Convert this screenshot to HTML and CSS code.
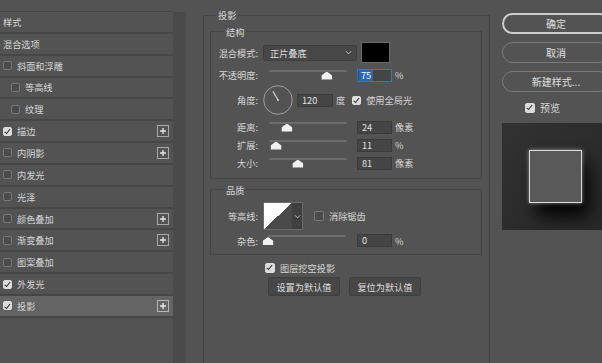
FILE: index.html
```html
<!DOCTYPE html>
<html lang="zh-CN">
<head>
<meta charset="utf-8">
<title>图层样式</title>
<link rel="stylesheet" href="styles.css">
</head>
<body>
<div class="dialog">
  <aside class="style-list">
    <div class="style-row"><span>样式</span></div>
    <div class="style-row"><span>混合选项</span></div>
    <div class="style-row"><span class="cb"></span><span>斜面和浮雕</span></div>
    <div class="style-row sub"><span class="cb"></span><span>等高线</span></div>
    <div class="style-row sub"><span class="cb"></span><span>纹理</span></div>
    <div class="style-row"><span class="cb checked"></span><span>描边</span>
      <svg class="plus" viewBox="0 0 12 12"><rect x="0.5" y="0.5" width="11" height="11" fill="none" stroke="#a9a9a9"/><path d="M6 3v6M3 6h6" stroke="#e2e2e2" stroke-width="1.4"/></svg></div>
    <div class="style-row"><span class="cb"></span><span>内阴影</span>
      <svg class="plus" viewBox="0 0 12 12"><rect x="0.5" y="0.5" width="11" height="11" fill="none" stroke="#a9a9a9"/><path d="M6 3v6M3 6h6" stroke="#e2e2e2" stroke-width="1.4"/></svg></div>
    <div class="style-row"><span class="cb"></span><span>内发光</span></div>
    <div class="style-row"><span class="cb"></span><span>光泽</span></div>
    <div class="style-row"><span class="cb"></span><span>颜色叠加</span>
      <svg class="plus" viewBox="0 0 12 12"><rect x="0.5" y="0.5" width="11" height="11" fill="none" stroke="#a9a9a9"/><path d="M6 3v6M3 6h6" stroke="#e2e2e2" stroke-width="1.4"/></svg></div>
    <div class="style-row"><span class="cb"></span><span>渐变叠加</span>
      <svg class="plus" viewBox="0 0 12 12"><rect x="0.5" y="0.5" width="11" height="11" fill="none" stroke="#a9a9a9"/><path d="M6 3v6M3 6h6" stroke="#e2e2e2" stroke-width="1.4"/></svg></div>
    <div class="style-row"><span class="cb"></span><span>图案叠加</span></div>
    <div class="style-row"><span class="cb checked"></span><span>外发光</span></div>
    <div class="style-row selected"><span class="cb checked"></span><span>投影</span>
      <svg class="plus" viewBox="0 0 12 12"><rect x="0.5" y="0.5" width="11" height="11" fill="none" stroke="#b5b5b5"/><path d="M6 3v6M3 6h6" stroke="#ececec" stroke-width="1.4"/></svg></div>
  </aside>
  <div class="scroll-strip"></div>

  <main class="settings">
    <section class="group outer">
      <div class="group-title">投影</div>

      <section class="group inner">
        <div class="group-title">结构</div>

        <div class="row r-blend">
          <span class="lbl">混合模式:</span>
          <div class="select"><span>正片叠底</span>
            <svg class="chev" viewBox="0 0 8 5"><path d="M1 1l3 3 3-3" stroke="#cfcfcf" stroke-width="1" fill="none"/></svg>
          </div>
          <div class="swatch"></div>
        </div>

        <div class="row r-opacity">
          <span class="lbl">不透明度:</span>
          <div class="slider"><span class="thumb" style="left:74%"></span></div>
          <div class="num focused"><span class="sel">75</span></div>
          <span class="unit">%</span>
        </div>

        <div class="row r-angle">
          <span class="lbl">角度:</span>
          <svg class="dial" viewBox="0 0 30 30">
            <circle cx="15" cy="15" r="14.3" fill="none" stroke="#a0a0a0" stroke-width="1"/>
            <path d="M15 15L10 6.4" stroke="#d0d0d0" stroke-width="1.2"/>
            <circle cx="15" cy="15" r="1.1" fill="#d0d0d0"/>
          </svg>
          <div class="num wide">120</div>
          <span class="unit deg">度</span>
          <span class="cb checked gl"></span>
          <span class="cb-text">使用全局光</span>
        </div>

        <div class="row r-slider r-dist">
          <span class="lbl">距离:</span>
          <div class="slider"><span class="thumb" style="left:23%"></span></div>
          <div class="num">24</div>
          <span class="unit">像素</span>
        </div>

        <div class="row r-slider">
          <span class="lbl">扩展:</span>
          <div class="slider"><span class="thumb" style="left:9%"></span></div>
          <div class="num">11</div>
          <span class="unit">%</span>
        </div>

        <div class="row r-slider">
          <span class="lbl">大小:</span>
          <div class="slider"><span class="thumb" style="left:37%"></span></div>
          <div class="num">81</div>
          <span class="unit">像素</span>
        </div>
      </section>

      <section class="group inner quality">
        <div class="group-title">品质</div>

        <div class="row r-contour">
          <span class="lbl">等高线:</span>
          <div class="contour">
            <div class="contour-swatch"></div>
            <div class="contour-drop">
              <svg class="chev" viewBox="0 0 8 5"><path d="M1 1l3 3 3-3" stroke="#cfcfcf" stroke-width="1" fill="none"/></svg>
            </div>
          </div>
          <span class="cb aa"></span>
          <span class="cb-text">消除锯齿</span>
        </div>

        <div class="row r-noise">
          <span class="lbl">杂色:</span>
          <div class="slider"><span class="thumb" style="left:0%"></span></div>
          <div class="num">0</div>
          <span class="unit">%</span>
        </div>
      </section>

      <div class="row r-knockout">
        <span class="cb checked big"></span>
        <span class="cb-text">图层挖空投影</span>
      </div>

      <div class="row r-buttons">
        <div class="btn-flat">设置为默认值</div>
        <div class="btn-flat">复位为默认值</div>
      </div>
    </section>
  </main>

  <aside class="actions">
    <div class="pill primary">确定</div>
    <div class="pill">取消</div>
    <div class="pill">新建样式...</div>
    <div class="row r-preview">
      <span class="cb checked big"></span>
      <span class="cb-text">预览</span>
    </div>
    <div class="preview-box">
      <div class="preview-square"></div>
    </div>
  </aside>
</div>
</body>
</html>
```

FILE: styles.css
```css
html, body {
  margin: 0;
  padding: 0;
}

body {
  width: 602px;
  height: 363px;
  overflow: hidden;
  background: #535353;
  font-family: "Noto Sans CJK SC", "Noto Sans", sans-serif;
  font-size: 9.2px;
  color: #d6d6d6;
}

.dialog {
  display: flex;
  width: 602px;
  height: 363px;
  overflow: hidden;
}

/* ---------- left style list ---------- */
.style-list {
  flex: none;
  width: 173px;
  padding-top: 11px;
}

.style-row {
  height: 21.85px;
  box-sizing: border-box;
  border-bottom: 2px solid #464646;
  display: flex;
  align-items: center;
  gap: 5px;
  padding: 0 4px 0 3px;
  white-space: nowrap;
}

.style-row:first-child {
  border-top: 1px solid #464646;
  height: 22.85px;
}

.style-row.sub {
  padding-left: 11px;
}

.style-row.selected {
  background: #646464;
}

.plus {
  width: 12px;
  height: 12px;
  margin-left: auto;
  flex: none;
}

.scroll-strip {
  flex: none;
  width: 13px;
  margin-top: 12px;
  background: #4a4a4a;
}

/* ---------- checkboxes ---------- */
.cb {
  flex: none;
  width: 9px;
  height: 9px;
  box-sizing: border-box;
  border: 1px solid #7a7a7a;
  border-radius: 2px;
  background: #4b4b4b;
  position: relative;
}

.cb.big {
  width: 10px;
  height: 10px;
}

.cb.checked {
  background: #dcdcdc;
  border-color: #dcdcdc;
}

.cb.checked::after {
  content: "";
  position: absolute;
  left: 2.2px;
  top: 0.4px;
  width: 2.4px;
  height: 4.6px;
  border-right: 1.6px solid #333;
  border-bottom: 1.6px solid #333;
  transform: rotate(40deg);
}

.cb-text {
  margin-left: 5px;
  white-space: nowrap;
}

/* ---------- settings ---------- */
.settings {
  flex: none;
  width: 287px;
  margin-left: 17px;
  padding-top: 15px;
}

.group {
  border: 1px solid #454545;
}

.outer {
  height: 360px;
  box-sizing: border-box;
  padding: 0 7px 0 6px;
}

.group-title {
  width: fit-content;
  height: 14px;
  line-height: 14px;
  padding: 0 2px;
  background: #535353;
  color: #d8d8d8;
}

.outer > .group-title {
  margin: -8px 0 0 6px;
}

.inner {
  margin-top: 9px;
  padding-bottom: 8px;
}

.inner > .group-title {
  margin: -7px 0 0 13px;
}

.quality {
  margin-top: 10px;
  padding-bottom: 7px;
}

.row {
  display: flex;
  align-items: center;
}

.lbl {
  flex: none;
  width: 47px;
  margin-right: 5px;
  text-align: right;
  line-height: 14px;
  white-space: nowrap;
}

.r-blend {
  height: 21px;
  margin-top: 3px;
}

.select {
  width: 94px;
  height: 16px;
  box-sizing: border-box;
  background: #474747;
  border: 1px solid #3e3e3e;
  border-radius: 2px;
  display: flex;
  align-items: center;
  justify-content: space-between;
  padding: 0 4px 0 6px;
  color: #dedede;
}

.chev {
  width: 7px;
  height: 5px;
}

.swatch {
  width: 29px;
  height: 21px;
  box-sizing: border-box;
  margin-left: 4px;
  background: #000;
  border: 1px solid #6c6c6c;
}

.r-opacity {
  height: 18px;
  margin-top: 3px;
}

.slider {
  flex: none;
  position: relative;
  width: 78px;
  height: 13px;
  margin: 0 10px 0 6px;
}

.slider::before {
  content: "";
  position: absolute;
  left: 0;
  right: 0;
  top: 1px;
  height: 2px;
  background: #6d6d6d;
  border-radius: 1px;
}

.thumb {
  position: absolute;
  top: 3px;
  width: 11px;
  height: 8px;
  transform: translateX(-50%);
  background: #f1f1f1;
  clip-path: polygon(50% 0, 100% 50%, 100% 100%, 0 100%, 0 50%);
}

.num {
  flex: none;
  width: 35px;
  height: 13px;
  box-sizing: border-box;
  background: #454545;
  border: 1px solid #3b3b3b;
  padding-left: 4px;
  line-height: 11px;
  color: #e2e2e2;
}

.num.wide {
  width: 36px;
  margin-left: 4px;
}

.num.focused {
  border-color: #3c73c2;
  padding-left: 1px;
}

.sel {
  display: inline-block;
  background: #2d67b3;
  color: #fff;
  padding: 0 2px;
}

.unit {
  margin-left: 3px;
  white-space: nowrap;
}

.r-angle {
  height: 30px;
  margin-top: 1px;
}

.dial {
  width: 30px;
  height: 30px;
  flex: none;
}

.cb.gl {
  margin-left: 7px;
}

.r-slider {
  height: 14px;
  margin-top: 4px;
}

.r-dist {
  margin-top: 5px;
}

.r-contour {
  height: 28px;
  margin-top: 5px;
}

.contour {
  display: flex;
  height: 28px;
  box-sizing: border-box;
  border: 1px solid #6a6a6a;
}

.contour-swatch {
  width: 28px;
  background: linear-gradient(to bottom right, #ffffff 50%, #4a4a4a 50%);
}

.contour-drop {
  width: 10px;
  background: #3f3f3f;
  display: flex;
  align-items: center;
  justify-content: center;
}

.cb.aa {
  margin-left: 11px;
  width: 10px;
  height: 10px;
}

.r-noise {
  height: 13px;
  margin-top: 4px;
}

.r-noise .slider {
  margin-left: 5px;
  margin-right: 11px;
}

.r-knockout {
  height: 11px;
  margin-top: 7px;
  padding-left: 55px;
}

.r-buttons {
  margin-top: 4px;
  padding-left: 58px;
  gap: 9px;
}

.btn-flat {
  width: 72px;
  height: 19px;
  box-sizing: border-box;
  background: #474747;
  border: 1px solid #3f3f3f;
  border-radius: 2px;
  display: flex;
  align-items: center;
  justify-content: center;
  color: #dddddd;
}

/* ---------- right actions ---------- */
.actions {
  flex: none;
  width: 108px;
  margin-left: 12px;
  padding-top: 13px;
  display: flex;
  flex-direction: column;
}

.pill {
  height: 21px;
  box-sizing: border-box;
  border: 1px solid #7b7b7b;
  border-radius: 11px;
  display: flex;
  align-items: center;
  justify-content: center;
  margin-bottom: 8px;
  font-size: 10px;
  color: #e0e0e0;
}

.pill.primary {
  border: 2px solid #cdcdcd;
}

.pill:nth-child(3) {
  margin-bottom: 0;
}

.r-preview {
  height: 11px;
  margin-top: 10px;
  padding-left: 23px;
}

.r-preview .cb-text {
  font-size: 10px;
}

.preview-box {
  margin-top: 10px;
  width: 107px;
  height: 107px;
  background: linear-gradient(135deg, #323232 0%, #2b2b2b 60%, #262626 100%);
  display: flex;
  align-items: center;
  justify-content: center;
  overflow: hidden;
}

.preview-square {
  width: 53px;
  height: 53px;
  box-sizing: border-box;
  background: #595959;
  border: 1px solid #dcdcdc;
  box-shadow: 0 0 4px rgba(255, 255, 255, 0.5), 7px 13px 16px rgba(0, 0, 0, 0.95);
}
```
